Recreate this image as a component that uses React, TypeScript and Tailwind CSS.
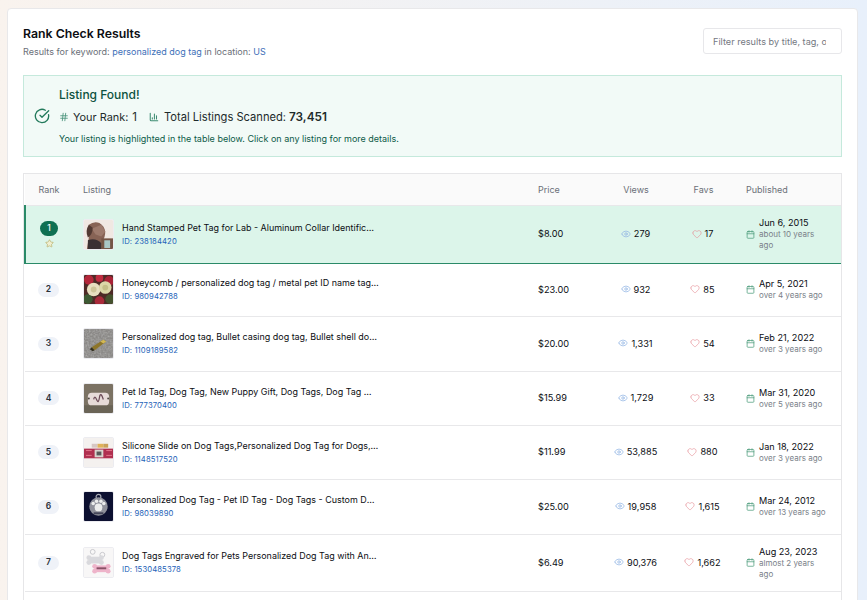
import { Calendar, ChartColumn, CircleCheckBig, Eye, Hash, Heart, Star } from "lucide-react";
import type { ReactNode } from "react";

const Dog = () => (
  <svg viewBox="0 0 30 30" className="h-full w-full blur-[0.5px]">
    <rect width="30" height="30" fill="#f0e8e2" />
    <path d="M5 5 Q10 1 16 3 Q21 6 22 12 Q22 18 19 22 L20 30 L3 30 L5 18 Z" fill="#876355" />
    <path d="M8 9 L18 5 L22 12 L18 17 L12 15 Z" fill="#9d7a6c" />
    <path d="M5 5 Q1 11 4 18 Q9 15 9 8 Z" fill="#523a33" />
    <path d="M4 21 Q12 18 18 24 L18 30 L4 30 Z" fill="#3b3033" />
    <rect x="18" y="19" width="12" height="11" fill="#755546" />
    <rect x="21" y="21" width="6" height="8" fill="#a9c6c6" />
  </svg>
);
const Roses = () => (
  <svg viewBox="0 0 30 30" className="h-full w-full blur-[0.5px]">
    <rect width="30" height="30" fill="#4d2a26" />
    <circle cx="5" cy="5" r="5" fill="#b3273a" />
    <circle cx="16" cy="3" r="4" fill="#c02c40" />
    <circle cx="26" cy="6" r="5" fill="#a82236" />
    <circle cx="4" cy="25" r="5" fill="#3d5a34" />
    <circle cx="16" cy="27" r="5" fill="#a92a3a" />
    <circle cx="27" cy="25" r="5" fill="#45522e" />
    <circle cx="10" cy="15" r="7" fill="#e8dfc0" />
    <circle cx="10" cy="15" r="3" fill="#cfc59a" />
    <circle cx="22" cy="13" r="6.5" fill="#dcd7a8" />
    <circle cx="22" cy="13" r="3" fill="#c4bf88" />
  </svg>
);
const Bullet = () => (
  <svg viewBox="0 0 30 30" className="h-full w-full">
    <defs>
      <filter id="gravel" x="0" y="0" width="100%" height="100%">
        <feTurbulence type="fractalNoise" baseFrequency="0.55" numOctaves="2" seed="4" />
        <feColorMatrix values="0 0 0 0 0.5 0 0 0 0 0.5 0 0 0 0 0.49 1.6 0 0 0 -0.5" />
      </filter>
    </defs>
    <rect width="30" height="30" fill="#8b8987" />
    <rect width="30" height="30" filter="url(#gravel)" opacity="0.7" />
    <path d="M8 19 L20 11 L23 13 L11 22 Z" fill="#8d7529" />
    <path d="M17 13 L20 11 L23 13 L20 15 Z" fill="#d3b955" />
    <path d="M8 19 L11 22 L9 23 L6 21 Z" fill="#33301f" />
  </svg>
);
const Plate = () => (
  <svg viewBox="0 0 30 30" className="h-full w-full blur-[0.4px]">
    <rect width="30" height="30" fill="#7b7263" />
    <rect y="22" width="30" height="8" fill="#6a6456" />
    <rect x="4" y="9" width="22" height="13" rx="4" fill="#e6dbd8" />
    <path d="M10 16 Q11 11 13 16 T16 14 T20 16" stroke="#6c4b57" strokeWidth="1.3" fill="none" />
    <circle cx="5" cy="15" r="1" fill="#4c4640" />
    <circle cx="25" cy="15" r="1" fill="#4c4640" />
  </svg>
);
const Collar = () => (
  <svg viewBox="0 0 30 30" className="h-full w-full blur-[0.3px]">
    <rect width="30" height="30" fill="#f4f1ef" />
    <rect x="8" y="6" width="6" height="4" fill="#d7c7c3" />
    <rect x="14" y="6" width="6" height="4" fill="#e0b25a" />
    <rect x="20" y="6" width="5" height="4" fill="#c9a15a" />
    <rect y="11" width="30" height="10" fill="#b03050" />
    <rect x="11" y="12" width="9" height="8" fill="#d9d5cf" />
    <rect x="13" y="14" width="5" height="4" fill="#5a5a5a" />
    <path d="M2 13 h6 M23 13 h6 M2 18 h6 M23 18 h6" stroke="#e4778c" strokeWidth="1" />
  </svg>
);
const Paw = () => (
  <svg viewBox="0 0 30 30" className="h-full w-full blur-[0.3px]">
    <rect width="30" height="30" fill="#0c1030" />
    <circle cx="15" cy="5" r="2.5" fill="none" stroke="#a7a9b3" strokeWidth="1.2" />
    <circle cx="15" cy="15" r="9.5" fill="#8f919b" />
    <circle cx="15" cy="16" r="4" fill="#eceded" />
    <circle cx="9.5" cy="12" r="1.8" fill="#eceded" />
    <circle cx="13" cy="9.5" r="1.8" fill="#eceded" />
    <circle cx="17.5" cy="9.5" r="1.8" fill="#eceded" />
    <circle cx="20.5" cy="12" r="1.8" fill="#eceded" />
    <rect x="10" y="21" width="10" height="2" fill="#44465a" />
  </svg>
);
const Bones = () => (
  <svg viewBox="0 0 30 30" className="h-full w-full blur-[0.3px]">
    <rect width="30" height="30" fill="#f8f7f7" />
    <circle cx="9" cy="4" r="2.5" fill="none" stroke="#c8c8cc" />
    <circle cx="19" cy="7" r="2.5" fill="none" stroke="#c8c8cc" />
    <g fill="#d9d9dd">
      <circle cx="5" cy="10" r="2.5" />
      <circle cx="5" cy="15" r="2.5" />
      <circle cx="18" cy="10" r="2.5" />
      <circle cx="18" cy="15" r="2.5" />
      <rect x="5" y="9" width="13" height="7" />
    </g>
    <g fill="#eeb4ca">
      <circle cx="11" cy="19" r="2.5" />
      <circle cx="11" cy="24" r="2.5" />
      <circle cx="25" cy="19" r="2.5" />
      <circle cx="25" cy="24" r="2.5" />
      <rect x="11" y="18" width="14" height="7" />
    </g>
    <rect x="13" y="20" width="10" height="2" fill="#8a5268" />
  </svg>
);

type Row = {
  rank: number;
  thumb: ReactNode;
  title: string;
  id: string;
  price: string;
  views: string;
  favs: string;
  date: string;
  ago: string;
  height: string;
  agoWidth: string;
};

const rows: Row[] = [
  { rank: 2, thumb: <Roses />, title: "Honeycomb / personalized dog tag / metal pet ID name tag Custom dog tag", id: "980942788", price: "$23.00", views: "932", favs: "85", date: "Apr 5, 2021", ago: "over 4 years ago", height: "h-[53px]", agoWidth: "" },
  { rank: 3, thumb: <Bullet />, title: "Personalized dog tag, Bullet casing dog tag, Bullet shell dog tag for pets", id: "1109189582", price: "$20.00", views: "1,331", favs: "54", date: "Feb 21, 2022", ago: "over 3 years ago", height: "h-[55px]", agoWidth: "" },
  { rank: 4, thumb: <Plate />, title: "Pet Id Tag, Dog Tag, New Puppy Gift, Dog Tags, Dog Tag Metal Custom", id: "777370400", price: "$15.99", views: "1,729", favs: "33", date: "Mar 31, 2020", ago: "over 5 years ago", height: "h-[54px]", agoWidth: "" },
  { rank: 5, thumb: <Collar />, title: "Silicone Slide on Dog Tags,Personalized Dog Tag for Dogs, Quiet Pet Tag", id: "1148517520", price: "$11.99", views: "53,885", favs: "880", date: "Jan 18, 2022", ago: "over 3 years ago", height: "h-[54px]", agoWidth: "" },
  { rank: 6, thumb: <Paw />, title: "Personalized Dog Tag - Pet ID Tag - Dog Tags - Custom Dog Tag for Pets", id: "98039890", price: "$25.00", views: "19,958", favs: "1,615", date: "Mar 24, 2012", ago: "over 13 years ago", height: "h-[55px]", agoWidth: "" },
  { rank: 7, thumb: <Bones />, title: "Dog Tags Engraved for Pets Personalized Dog Tag with Any Text or Name", id: "1530485378", price: "$6.49", views: "90,376", favs: "1,662", date: "Aug 23, 2023", ago: "almost 2 years ago", height: "h-[57px]", agoWidth: "w-[68px]" },
];

const Thumb = ({ children }: { children: ReactNode }) => (
  <div className="h-[31px] w-[31px] shrink-0 overflow-hidden rounded-[2px] border border-[#ececf0] bg-white">{children}</div>
);

const Listing = ({ thumb, title, id }: { thumb: ReactNode; title: string; id: string }) => (
  <div className="flex items-center gap-[8px]">
    <Thumb>{thumb}</Thumb>
    <div className="w-[257px] min-w-0">
      <div className="truncate text-[8.95px] leading-[13px] text-[#0b0d12]">{title}</div>
      <div className="mt-[2px] text-[7.7px] leading-[12px] tracking-[0.1px] text-[#2563b8]">ID: {id}</div>
    </div>
  </div>
);

const Count = ({ views }: { views: string }) => (
  <div className="flex items-center justify-center gap-[3px] text-[9.2px] text-[#0b0d12]">
    <Eye className="h-[10px] w-[10px] text-[#8fb3e4]" strokeWidth={1.75} />
    {views}
  </div>
);
const Favs = ({ favs }: { favs: string }) => (
  <div className="flex items-center justify-center gap-[3px] text-[9.2px] text-[#0b0d12]">
    <Heart className="h-[10px] w-[10px] text-[#e58f95]" strokeWidth={1.5} />
    {favs}
  </div>
);
const Published = ({ date, ago, agoWidth }: { date: string; ago: string; agoWidth: string }) => (
  <div className="flex items-center gap-[4px]">
    <Calendar className="h-[9px] w-[9px] shrink-0 text-[#4f9d7d]" strokeWidth={2} />
    <div>
      <div className="text-[9.1px] leading-[12px] text-[#0b0d12]">{date}</div>
      <div className={`whitespace-normal text-[8px] leading-[11px] text-[#7a7f89] ${agoWidth}`}>{ago}</div>
    </div>
  </div>
);

const th = "px-0 text-[9px] font-normal text-[#6b7078]";

export default function App() {
  return (
    <div className="h-screen overflow-hidden bg-gradient-to-r from-[#f9f3ee] to-[#e8f0fb] pl-[7px] pr-[9px] pt-[8px] font-['Inter',sans-serif]">
      <div className="rounded-t-[4px] border border-[#e8e8ea] bg-white px-[15px] pt-[15px]">
        <div className="flex items-start justify-between">
          <div className="pt-[1px]">
            <h1 className="text-[12.3px] font-semibold leading-[18px] text-[#0b0d12]">Rank Check Results</h1>
            <p className="mt-[1px] text-[9px] leading-[16px] text-[#6b7078]">
              Results for keyword: <span className="text-[#3d6fb8]">personalized dog tag</span> in location: <span className="text-[#3d6fb8]">US</span>
            </p>
          </div>
          <input
            className="mt-[4px] h-[26px] w-[139px] rounded-[3px] border border-[#e7e7ea] bg-white pl-[9px] pr-[15px] text-[9.15px] text-[#15171c] outline-none placeholder:text-[#74787f]"
            placeholder="Filter results by title, tag, or shop"
          />
        </div>

        <div className="mt-[15px] flex h-[82px] items-center gap-[9px] border border-[#c5e9dc] bg-[#f2faf7] pl-[10px]">
          <CircleCheckBig className="h-[16px] w-[16px] text-[#237a5c]" strokeWidth={2} />
          <div>
            <div className="text-[12px] font-medium leading-[16px] text-[#0d5240]">Listing Found!</div>
            <div className="mt-[6px] flex items-center text-[10.9px] leading-[16px] text-[#1d2a2b]">
              <Hash className="mr-[4px] h-[10px] w-[10px] text-[#47927a]" strokeWidth={2} />
              <span>Your Rank:</span>
              <span className="ml-[4px] text-[11.5px]">1</span>
              <ChartColumn className="ml-[12px] mr-[5px] h-[10px] w-[10px] text-[#3d8c72]" strokeWidth={2.5} />
              <span className="text-[11.15px]">Total Listings Scanned:</span>
              <span className="ml-[3px] text-[11.8px] font-semibold">73,451</span>
            </div>
            <div className="mt-[8px] text-[9px] leading-[12px] text-[#0d5a48]">Your listing is highlighted in the table below. Click on any listing for more details.</div>
          </div>
        </div>

        <div className="mt-[16px] border-x border-t border-[#e6e6e8]">
          <table className="w-full table-fixed border-collapse">
            <colgroup>
              <col className="w-[49px]" />
              <col className="w-[455px]" />
              <col className="w-[69px]" />
              <col className="w-[78px]" />
              <col className="w-[56px]" />
              <col />
            </colgroup>
            <thead>
              <tr className="h-[31px] border-b border-[#e8e8ea] bg-[#fafafa]">
                <th className={`${th} pr-[1px] text-center`}>Rank</th>
                <th className={`${th} pl-[9px] text-left`}>Listing</th>
                <th className={`${th} pl-[9px] text-left`}>Price</th>
                <th className={`${th} pr-[2px] text-center`}>Views</th>
                <th className={`${th} pr-[1px] text-center`}>Favs</th>
                <th className={`${th} pl-[14px] text-left`}>Published</th>
              </tr>
            </thead>
            <tbody>
              <tr className="h-[58px] border-b border-b-[#2a8a68] bg-[#dcf5ea]">
                <td className="border-l-2 border-l-[#2a8a68] p-0 pr-[2px]">
                  <div className="flex flex-col items-center gap-[3px]">
                    <span className="flex h-[15px] w-[18px] items-center justify-center rounded-full bg-[#0f7052] text-[8.5px] font-medium text-white">1</span>
                    <Star className="h-[9px] w-[9px] fill-[#f0efd0] text-[#b5ad66]" strokeWidth={1.75} />
                  </div>
                </td>
                <td className="pl-[9px]"><Listing thumb={<Dog />} title="Hand Stamped Pet Tag for Lab - Aluminum Collar Identification Tag for Dogs" id="238184420" /></td>
                <td className="pl-[9px] text-[9.2px] text-[#0b0d12]">$8.00</td>
                <td className="pr-[3px]"><Count views="279" /></td>
                <td className="pr-[3px]"><Favs favs="17" /></td>
                <td className="pl-[14px]"><Published date="Jun 6, 2015" ago="about 10 years ago" agoWidth="w-[68px]" /></td>
              </tr>
              {rows.map((r) => (
                <tr key={r.rank} className={`${r.height} border-b border-[#e8e8ea]`}>
                  <td className="p-0 pr-[2px]">
                    <div className="flex justify-center">
                      <span className="flex h-[14px] w-[21px] items-center justify-center rounded-full bg-[#eff2f8] text-[8.5px] font-semibold text-[#2a2f38]">{r.rank}</span>
                    </div>
                  </td>
                  <td className="pl-[9px]"><Listing thumb={r.thumb} title={r.title} id={r.id} /></td>
                  <td className="pl-[9px] text-[9.2px] text-[#0b0d12]">{r.price}</td>
                  <td className="pr-[3px]"><Count views={r.views} /></td>
                  <td className="pr-[3px]"><Favs favs={r.favs} /></td>
                  <td className="pl-[14px]"><Published date={r.date} ago={r.ago} agoWidth={r.agoWidth} /></td>
                </tr>
              ))}
              <tr className="h-[60px]"><td colSpan={6} /></tr>
            </tbody>
          </table>
        </div>
      </div>
    </div>
  );
}
